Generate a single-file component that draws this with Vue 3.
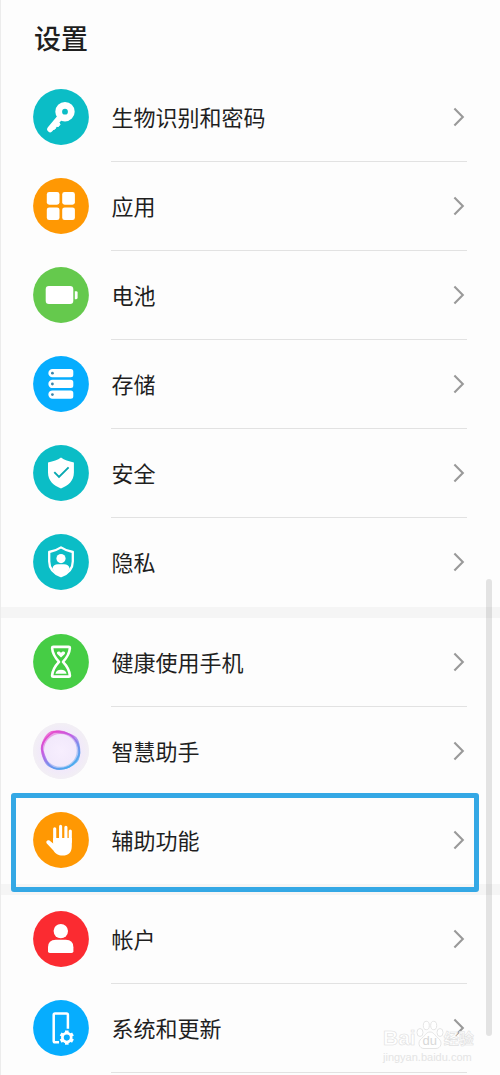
<template>
  <div class="settings">
    <h1 class="title">设置</h1>
    <div v-for="(group, index) in groups" :key="index" class="group">
      <div v-for="item in group" :key="item.icon" class="row">
        <svg class="icon" viewBox="0 0 56 56">
          <circle cx="28" cy="28" r="27.9" :fill="item.color" />

          <g v-if="item.icon === 'key'">
            <path d="M27 28.4 L17.2 40.2" stroke="#fff" stroke-width="6" stroke-linecap="round" />
            <path d="M23 32 L27.2 35 L25.6 37.4 L23.4 37.4 L22 40 L18.6 41z" fill="#fff" stroke="#fff" stroke-linejoin="round" />
            <circle cx="32" cy="22.7" r="6.3" fill="none" stroke="#fff" stroke-width="6.8" />
          </g>

          <g v-else-if="item.icon === 'apps'" fill="#fff">
            <rect x="13.8" y="14" width="12.7" height="12.7" rx="2.4" />
            <rect x="29.2" y="14" width="12.7" height="12.7" rx="2.4" />
            <rect x="13.8" y="29.4" width="12.7" height="12.7" rx="2.4" />
            <rect x="29.2" y="29.4" width="12.7" height="12.7" rx="2.4" />
          </g>

          <g v-else-if="item.icon === 'battery'" fill="#fff">
            <rect x="12.7" y="19" width="27.6" height="18" rx="3.2" />
            <path d="M41.8 24.2 h1.4 a1.4 1.4 0 0 1 1.4 1.4 v5.2 a1.4 1.4 0 0 1 -1.4 1.4 h-1.4z" />
          </g>

          <g v-else-if="item.icon === 'storage'">
            <g v-for="y in [13, 23.8, 34.4]" :key="y">
              <path :d="`M19.5 ${y} h18.3 a2.5 2.5 0 0 1 2.5 2.5 v3.3 a2.5 2.5 0 0 1 -2.5 2.5 h-18.3 a4.15 4.15 0 0 1 0 -8.3z`" fill="#fff" />
              <circle cx="19.4" :cy="y + 4.2" r="1.4" fill="#3a86ab" />
            </g>
          </g>

          <g v-else-if="item.icon === 'security'">
            <path d="M28 12.6 Q33 16.2 40.9 17.4 V27.5 C40.9 36 35 40.8 28 43.4 C21 40.8 15 36 15 27.5 V17.4 Q23 16.2 28 12.6z" fill="#fff" />
            <path d="M21.3 27.2 L26 32 L35.6 22.4" fill="none" stroke="#08a9b1" stroke-width="1.9" />
          </g>

          <g v-else-if="item.icon === 'privacy'">
            <path d="M28 13.4 Q33 16.8 39.8 18 V27.5 C39.8 35.5 34.6 39.7 28 42.2 C21.4 39.7 16.2 35.5 16.2 27.5 V18 Q23 16.8 28 13.4z" fill="none" stroke="#fff" stroke-width="2.3" stroke-linejoin="round" />
            <circle cx="28" cy="24.6" r="4.6" fill="#fff" />
            <path d="M19.4 34.6 C20 31.6 22 30.3 25 30.3 H31 C34 30.3 36 31.6 36.6 34.6 C34.6 38.8 31.5 41 28 42.4 C24.5 41 21.4 38.8 19.4 34.6z" fill="#fff" />
          </g>

          <g v-else-if="item.icon === 'hourglass'">
            <path d="M20.3 12.9 H35.7 Q36.9 12.9 36.9 14 Q36.4 21 30 27.8 Q36.4 34.6 36.9 41.4 Q36.9 42.6 35.7 42.6 H20.3 Q19.1 42.6 19.1 41.4 Q19.6 34.6 26 27.8 Q19.6 21 19.1 14 Q19.1 12.9 20.3 12.9z" fill="none" stroke="#fff" stroke-width="2.6" stroke-linejoin="round" />
            <path d="M28 23.6 L24.5 20.2 C22.6 18 25.8 16.1 28 18.8 C30.2 16.1 33.4 18 31.5 20.2z" fill="#fff" />
            <path d="M22.4 39.8 Q23.2 36 28 35.8 Q32.8 36 33.6 39.8z" fill="#fff" />
          </g>

          <g v-else-if="item.icon === 'assistant'">
            <defs>
              <radialGradient id="halo">
                <stop offset="0" stop-color="#f7eefe" />
                <stop offset="0.65" stop-color="#f1e8fb" />
                <stop offset="1" stop-color="#f2eff4" />
              </radialGradient>
              <linearGradient id="ring" gradientUnits="userSpaceOnUse" x1="15" y1="11" x2="38" y2="45">
                <stop offset="0" stop-color="#e840c8" />
                <stop offset="0.35" stop-color="#bd5ce4" />
                <stop offset="0.62" stop-color="#7288ec" />
                <stop offset="1" stop-color="#43aeee" />
              </linearGradient>
            </defs>
            <circle cx="28" cy="28" r="27.9" fill="url(#halo)" />
            <g fill="none" stroke="url(#ring)">
              <path
                v-for="(d, i) in ringPaths"
                :key="i"
                :d="d"
                stroke-width="1.6"
                opacity="0.7"
              />
              <circle cx="27.4" cy="27.4" r="17.8" stroke-width="2.8" opacity="0.45" />
            </g>
          </g>

          <g v-else-if="item.icon === 'hand'" fill="none" stroke="#fff" stroke-linecap="round">
            <path d="M21.7 30 V16.8 M27.6 30 V14.4 M32.9 30 V15.2 M37.3 30 V19" stroke-width="3.1" />
            <path d="M20.2 26 H38.8 V34 C38.8 40.5 35.4 43.6 29.6 43.6 C25 43.6 22.6 41.8 20.4 38.6 L13.6 31.2 C12.4 29.2 14.8 27.4 16.8 28.8 L20.2 31.6z" fill="#fff" stroke="none" />
          </g>

          <g v-else-if="item.icon === 'account'" fill="#fff">
            <circle cx="27.8" cy="20.1" r="7.2" />
            <path d="M22.8 28.7 H32.8 Q40.4 28.7 40.4 36.3 V40.3 Q40.4 42.1 38.6 42.1 H16.8 Q15 42.1 15 40.3 V36.3 Q15 28.7 22.8 28.7z" />
          </g>

          <g v-else-if="item.icon === 'system'" fill="none" stroke="#fff">
            <path d="M26 42.2 H22 Q20.7 42.2 20.7 40.9 V14.9 Q20.7 13.6 22 13.6 H33.6 Q34.9 13.6 34.9 14.9 V28.8" stroke-width="2.5" />
            <circle cx="33.8" cy="37.6" r="4.4" stroke-width="2.7" />
            <path
              v-for="turn in [0, 60, 120, 180, 240, 300]"
              :key="turn"
              d="M33.8 30.5 V33"
              :transform="`rotate(${turn} 33.8 37.6)`"
              stroke-width="3.6"
            />
          </g>
        </svg>

        <div class="row-content">
          <span class="label">{{ item.label }}</span>
          <svg class="chevron" viewBox="0 0 12 20">
            <path d="M1.4 1.6 L9.8 10 L1.4 18.4" />
          </svg>
        </div>
      </div>
    </div>

    <div class="highlight"></div>
    <div class="scrollbar"></div>

    <div class="watermark">
      <div class="brand">
        <span class="outlined">Bai</span>
        <span class="paw">
          <svg viewBox="0 0 28 30">
            <ellipse cx="4" cy="12.5" rx="3" ry="4" />
            <ellipse cx="10.3" cy="5.5" rx="3" ry="4.2" />
            <ellipse cx="17.7" cy="5.5" rx="3" ry="4.2" />
            <ellipse cx="24" cy="12.5" rx="3" ry="4" />
            <path d="M14 12 C18 12 19 16 22.5 18.5 C27 22 25 28.5 20 28.5 H8 C3 28.5 1 22 5.5 18.5 C9 16 10 12 14 12z" />
          </svg>
          <span class="du">du</span>
        </span>
        <span class="outlined cn">经验</span>
      </div>
      <div class="site">jingyan.baidu.com</div>
    </div>
  </div>
</template>

<script setup>
// overlapping loops of the assistant's ring
const ringPaths = [
  "M23 8.4 C28 8 40 11.5 43 15 C47 20 47.5 32 45 36.5 C42 42 32 46.5 26 46.3 C20 46 12 39 10 33 C7.5 26 10 19 14 14.5 C17 11 19 8.7 23 8.4z",
  "M26 8 C33 8.5 41 13 44.5 20 C47 26 47.5 31 43.5 37 C39 44 32 46 24 45.5 C17 45 12 41 11 35 C9.5 28 7.5 25 10 20 C13 14 19 8 26 8z",
  "M21 8.5 C27 10.5 34 9 39.5 13.5 C44 17.5 46 24 46.5 30 C45 37 41 40.5 36 44 C29 47 21 46.5 17 43 C12.5 39 12 32 8.5 26 C9 18 15 8 21 8.5z"
];

const groups = [
  [
    { icon: "key", label: "生物识别和密码", color: "#0bbdc6" },
    { icon: "apps", label: "应用", color: "#ff9803" },
    { icon: "battery", label: "电池", color: "#65c94d" },
    { icon: "storage", label: "存储", color: "#06adfe" },
    { icon: "security", label: "安全", color: "#0bbdc6" },
    { icon: "privacy", label: "隐私", color: "#0bbdc6" }
  ],
  [
    { icon: "hourglass", label: "健康使用手机", color: "#46cd45" },
    { icon: "assistant", label: "智慧助手", color: "#f2ecf8" },
    { icon: "hand", label: "辅助功能", color: "#ff9803" }
  ],
  [
    { icon: "account", label: "帐户", color: "#fb2b31" },
    { icon: "system", label: "系统和更新", color: "#06adfe" }
  ]
];
</script>

<style>
body {
  margin: 0;
  background: #fdfdfd;
}
</style>

<style scoped>
.settings {
  position: relative;
  box-sizing: border-box;
  width: 500px;
  height: 1075px;
  overflow: hidden;
  border-left: 1px solid #ececec;
  background: #fdfdfd;
  color: #1f1f1f;
  font-family: "Noto Sans CJK SC", "Noto Sans", sans-serif;
}

.title {
  box-sizing: border-box;
  height: 73.3px;
  margin: 0;
  padding: 18px 0 0 33px;
  font-size: 27px;
  line-height: 40px;
  font-weight: 500;
}

.group + .group {
  border-top: 11px solid #f5f5f5;
}

.row {
  display: flex;
  align-items: center;
  height: 88.9px;
  padding: 0 33px 0 32px;
}

.icon {
  flex: none;
  width: 56px;
  height: 56px;
  margin: 0 22px 0.6px 0;
}

.row-content {
  box-sizing: border-box;
  display: flex;
  flex: 1;
  align-items: center;
  justify-content: space-between;
  height: 100%;
  padding: 0.4px 2px 0 0.4px;
  border-bottom: 1px solid #e2e2e2;
}

.row:last-child .row-content {
  border-bottom-color: transparent;
}

.label {
  padding-bottom: 2px;
  font-size: 22px;
  line-height: 32px;
}

.chevron {
  width: 12px;
  height: 20px;
  fill: none;
  stroke: #999;
  stroke-width: 2.1;
}

.group:nth-of-type(3) .row:last-child .row-content {
  border-bottom-color: #e2e2e2;
}

.highlight {
  position: absolute;
  box-sizing: border-box;
  top: 793px;
  left: 10px;
  width: 468px;
  height: 99px;
  border: 5.5px solid #34a8e5;
  border-radius: 3px;
}

.scrollbar {
  position: absolute;
  top: 579px;
  left: 485px;
  width: 6px;
  height: 457px;
  border-radius: 3px;
  background: rgba(0, 0, 0, 0.1);
}

.watermark {
  position: absolute;
  top: 1020px;
  left: 382px;
  width: 92px;
  font-family: "Liberation Sans", "Noto Sans CJK SC", sans-serif;
}

.brand {
  display: flex;
  align-items: flex-end;
  height: 30px;
}

.outlined {
  color: #fff;
  font-size: 21px;
  font-weight: bold;
  line-height: 24px;
  -webkit-text-stroke: 0.6px #e0e0e0;
}

.cn {
  font-size: 15px;
  line-height: 22px;
}

.paw {
  position: relative;
  width: 28px;
  height: 30px;
}

.paw svg {
  display: block;
  width: 28px;
  height: 30px;
  fill: #fff;
  stroke: #dedede;
  stroke-width: 0.8;
}

.du {
  position: absolute;
  right: 0;
  bottom: 3px;
  left: 0;
  color: #d8d8d8;
  font-size: 13px;
  line-height: 13px;
  text-align: center;
}

.site {
  color: #e4e4e4;
  font-size: 11px;
  line-height: 14px;
}
</style>
